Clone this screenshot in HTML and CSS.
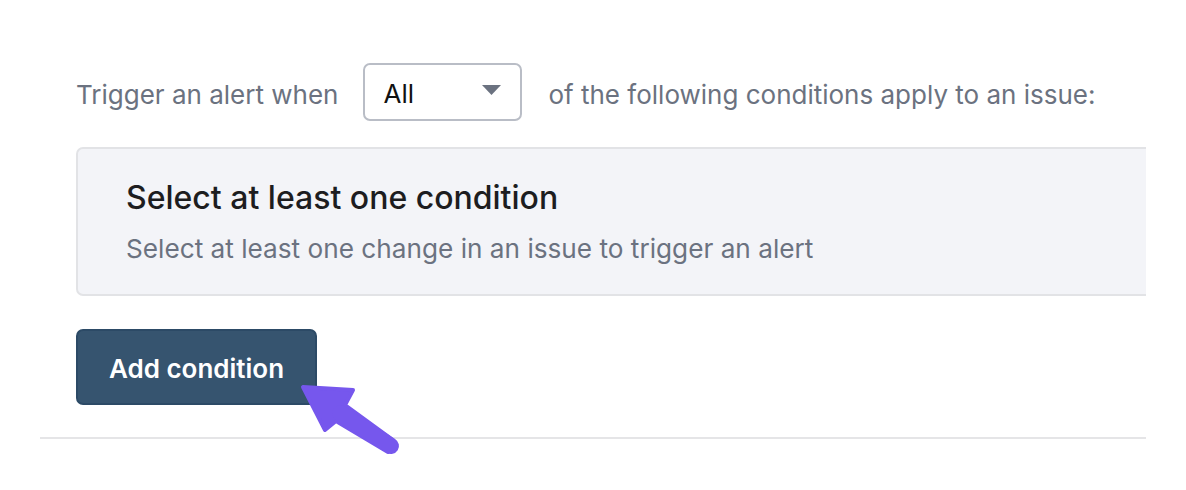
FILE: index.html
```html
<!DOCTYPE html>
<html>
<head>
<meta charset="utf-8">
<link rel="stylesheet" href="styles.css">
</head>
<body>
<div class="page">
  <div class="section">
    <div class="trigger-row">
      <span class="label">Trigger an alert when</span>
      <div class="select">
        <span class="select-value">All</span>
        <svg class="caret" width="19" height="10" viewBox="0 0 19 10"><polygon points="0,0 19,0 9.5,10" fill="#6b7280"/></svg>
      </div>
      <span class="label">of the following conditions apply to an issue:</span>
    </div>
    <div class="panel">
      <div class="panel-title">Select at least one condition</div>
      <div class="panel-sub">Select at least one change in an issue to trigger an alert</div>
    </div>
    <div class="actions">
      <button class="btn">Add condition</button>
    </div>
  </div>
  <svg class="pointer" width="120" height="90" viewBox="290 375 120 90">
    <polygon points="303,387 353,390 345,405 393,440 388,452 336,421 325,430" fill="#7657ed" stroke="#7657ed" stroke-width="4" stroke-linejoin="round"/>
    <line x1="340" y1="413" x2="391" y2="446" stroke="#7657ed" stroke-width="16" stroke-linecap="round"/>
  </svg>
</div>
</body>
</html>
```
FILE: styles.css
```css
html, body {
  margin: 0;
  padding: 0;
  background: #ffffff;
}
body {
  font-family: Inter, "Noto Sans", sans-serif;
}
.page {
  position: relative;
  width: 1186px;
  height: 490px;
  padding-left: 40px;
  box-sizing: border-box;
}
.section {
  width: 1106px;
  overflow: hidden;
  padding: 63px 0 32px 36px;
  box-sizing: border-box;
  border-bottom: 2px solid #e5e5e7;
}
.trigger-row {
  display: flex;
  align-items: center;
  height: 58px;
}
.label {
  font-size: 26px;
  color: #6b7280;
  white-space: nowrap;
  flex-shrink: 0;
  margin-top: 4px;
}
.select {
  flex-shrink: 0;
  width: 159px;
  height: 58px;
  box-sizing: border-box;
  border: 2px solid #b9bdc6;
  border-radius: 7px;
  margin: 0 26px 0 25px;
  display: flex;
  align-items: center;
  justify-content: space-between;
  padding: 0 19px 0 18px;
}
.select-value {
  font-size: 26px;
  color: #111111;
  margin-top: 3px;
}
.caret {
  display: block;
  margin-top: -4px;
}
.panel {
  margin-top: 26px;
  margin-right: -20px;
  height: 149px;
  box-sizing: border-box;
  background: #f3f4f8;
  border: 2px solid #e2e3e6;
  border-radius: 7px;
  padding: 29px 50px 0 48px;
}
.panel-title {
  font-size: 32px;
  font-weight: 500;
  color: #1d1d1f;
  line-height: 40px;
  white-space: nowrap;
}
.panel-sub {
  font-size: 26.2px;
  color: #6b7280;
  line-height: 34px;
  margin-top: 14px;
  white-space: nowrap;
}
.actions {
  margin-top: 33px;
  display: flex;
}
.btn {
  width: 241px;
  height: 76px;
  background: #36546f;
  border: 2px solid #2c4a66;
  border-radius: 7px;
  color: #ffffff;
  font-family: Inter, "Noto Sans", sans-serif;
  font-size: 26px;
  font-weight: 600;
  padding: 2px 0 0 0;
}
.pointer {
  position: absolute;
  left: 290px;
  top: 375px;
}
```
